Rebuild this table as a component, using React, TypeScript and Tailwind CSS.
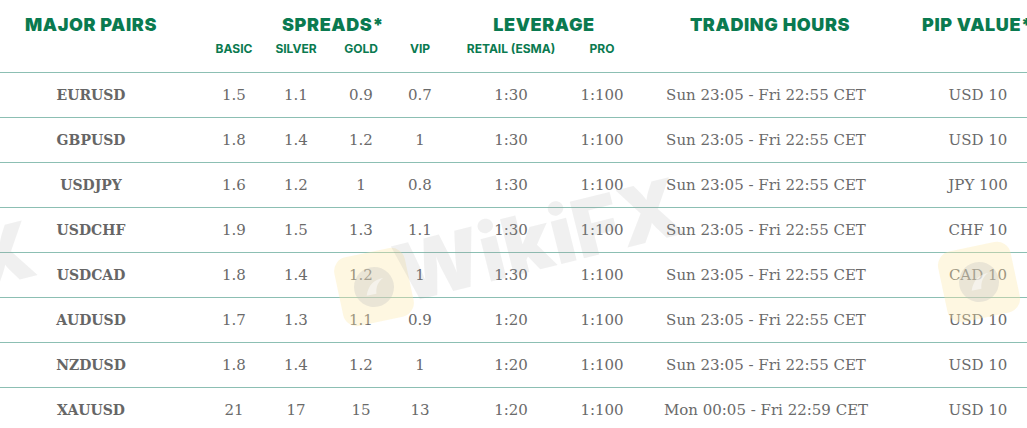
const rows = [
  { pair: "EURUSD", spreads: ["1.5", "1.1", "0.9", "0.7"], retail: "1:30", pro: "1:100", hours: "Sun 23:05 - Fri 22:55 CET", pip: "USD 10" },
  { pair: "GBPUSD", spreads: ["1.8", "1.4", "1.2", "1"], retail: "1:30", pro: "1:100", hours: "Sun 23:05 - Fri 22:55 CET", pip: "USD 10" },
  { pair: "USDJPY", spreads: ["1.6", "1.2", "1", "0.8"], retail: "1:30", pro: "1:100", hours: "Sun 23:05 - Fri 22:55 CET", pip: "JPY 100" },
  { pair: "USDCHF", spreads: ["1.9", "1.5", "1.3", "1.1"], retail: "1:30", pro: "1:100", hours: "Sun 23:05 - Fri 22:55 CET", pip: "CHF 10" },
  { pair: "USDCAD", spreads: ["1.8", "1.4", "1.2", "1"], retail: "1:30", pro: "1:100", hours: "Sun 23:05 - Fri 22:55 CET", pip: "CAD 10" },
  { pair: "AUDUSD", spreads: ["1.7", "1.3", "1.1", "0.9"], retail: "1:20", pro: "1:100", hours: "Sun 23:05 - Fri 22:55 CET", pip: "USD 10" },
  { pair: "NZDUSD", spreads: ["1.8", "1.4", "1.2", "1"], retail: "1:20", pro: "1:100", hours: "Sun 23:05 - Fri 22:55 CET", pip: "USD 10" },
  { pair: "XAUUSD", spreads: ["21", "17", "15", "13"], retail: "1:20", pro: "1:100", hours: "Mon 00:05 - Fri 22:59 CET", pip: "USD 10" },
];

// spread columns: width + left margin
const spreadCols = ["ml-[40px] w-[56px]", "ml-[6px] w-[56px]", "ml-[9px] w-[56px]", "ml-[11px] w-[40px]"];
const spreadLabels = ["BASIC", "SILVER", "GOLD", "VIP"];

const Logo = ({ className }: { className: string }) => (
  <div className={`pointer-events-none absolute rounded-[14px] bg-[#fbe9a8]/35 flex items-center justify-center ${className}`}>
    <svg width="46" height="46" viewBox="0 0 46 46">
      <circle cx="23" cy="23" r="20" fill="#bdbdbd" fillOpacity="0.3" />
      <path d="M14 30c4-10 10-14 20-14-6 3-9 7-10 14z" fill="#fff" fillOpacity="0.5" />
    </svg>
  </div>
);

const App = () => {
  return (
    <div className="relative w-[1027px] h-[428px] overflow-hidden bg-white">
      {/* header */}
      <div className="h-[73px] border-b border-[#8cbfb3] font-['Inter',sans-serif] text-[#0a7a50]">
        <div className="flex *:shrink-0 pt-[13px] h-[37px] items-center text-[18px] font-black tracking-[0.6px] leading-6 whitespace-nowrap">
          <div className="ml-[16px] w-[150px] text-center">MAJOR PAIRS</div>
          <div className="ml-[40px] w-[254px] text-center">SPREADS*</div>
          <div className="ml-[-8px] w-[184px] text-center">LEVERAGE</div>
          <div className="ml-[24px] w-[220px] text-center">TRADING HOURS</div>
          <div className="ml-[42px] w-[140px] text-left">PIP VALUE*</div>
        </div>
        <div className="flex *:shrink-0 mt-[3px] h-[18px] items-center text-[12px] font-bold whitespace-nowrap">
          <div className="ml-[16px] w-[150px]" />
          {spreadLabels.map((s, i) => (
            <div key={s} className={`${spreadCols[i]} text-center`}>
              {s}
            </div>
          ))}
          <div className="ml-[21px] w-[100px] text-center">RETAIL (ESMA)</div>
          <div className="ml-[11px] w-[60px] text-center">PRO</div>
        </div>
      </div>

      {/* rows */}
      {rows.map((r) => (
        <div
          key={r.pair}
          className="flex *:shrink-0 h-[45px] items-center border-b border-[#8cbfb3] font-['DejaVu_Serif',serif] text-[15px] text-[#6a6a6a] whitespace-nowrap"
        >
          <div className="ml-[16px] w-[150px] text-center text-[14px] font-bold text-[#666]">{r.pair}</div>
          {r.spreads.map((s, i) => (
            <div key={i} className={`${spreadCols[i]} text-center`}>
              {s}
            </div>
          ))}
          <div className="ml-[21px] w-[100px] text-center">{r.retail}</div>
          <div className="ml-[11px] w-[60px] text-center">{r.pro}</div>
          <div className="ml-[24px] w-[220px] text-center">{r.hours}</div>
          <div className="ml-[37px] w-[130px] text-center">{r.pip}</div>
        </div>
      ))}

      {/* watermark */}
      <div className="pointer-events-none absolute left-[-28px] top-[196px] -rotate-[14deg] font-['Inter',sans-serif] text-[78px] font-black text-[#9a9a9a]/15">
        X
      </div>
      <Logo className="left-[338px] top-[252px] w-[72px] h-[70px] -rotate-[12deg]" />
      <div className="pointer-events-none absolute left-[392px] top-[200px] -rotate-[14deg] font-['Inter',sans-serif] text-[80px] font-black leading-none text-[#9a9a9a]/15">
        WikiFX
      </div>
      <Logo className="left-[942px] top-[246px] w-[74px] h-[72px] -rotate-[12deg]" />
    </div>
  );
};

export default App;
